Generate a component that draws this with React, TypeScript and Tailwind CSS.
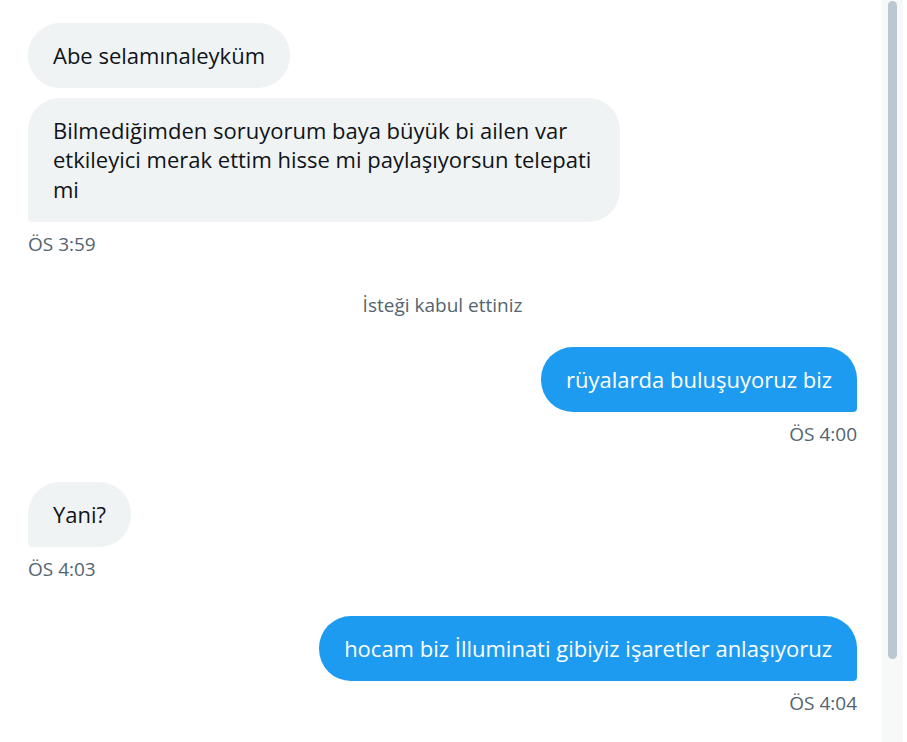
import React from "react";

const font = { fontFamily: '"Open Sans", "Noto Sans", sans-serif' };

function Bubble({ kind, text, tail }: { kind: "in" | "out"; text: string; tail?: boolean }) {
  const base = "max-w-[592px] rounded-[32px] px-[25px] py-[17.75px] text-[22px] leading-[29.5px]";
  if (kind === "in") {
    return (
      <div className={`${base} bg-[#eff3f4] text-[#0f1419] ${tail ? "rounded-bl-[4px]" : ""}`}>
        {text}
      </div>
    );
  }
  return (
    <div className={`${base} bg-[#1d9bf0] text-white ${tail ? "rounded-br-[4px]" : ""}`}>
      {text}
    </div>
  );
}

function Time({ children, right }: { children: React.ReactNode; right?: boolean }) {
  return (
    <div className={`mt-3 text-[19px] leading-5 text-[#536471] ${right ? "text-right" : ""}`}>
      {children}
    </div>
  );
}

export default function App() {
  return (
    <div className="flex h-[742px] w-[907px] overflow-hidden bg-white" style={font}>
      <div className="flex-1 pl-[28px] pr-[25px] pt-[23px]">
        <div className="flex flex-col items-start gap-[10px]">
          <Bubble kind="in" text="Abe selamınaleyküm" />
          <Bubble kind="in" tail text="Bilmediğimden soruyorum baya büyük bi ailen var etkileyici merak ettim hisse mi paylaşıyorsun telepati mi" />
        </div>
        <Time>ÖS 3:59</Time>

        <div className="mt-[41px] text-center text-[19px] leading-5 text-[#536471]">İsteği kabul ettiniz</div>

        <div className="mt-[32px] flex justify-end">
          <Bubble kind="out" tail text="rüyalarda buluşuyoruz biz" />
        </div>
        <Time right>ÖS 4:00</Time>

        <div className="mt-[38px] flex">
          <Bubble kind="in" tail text="Yani?" />
        </div>
        <Time>ÖS 4:03</Time>

        <div className="mt-[37px] flex justify-end">
          <Bubble kind="out" tail text="hocam biz İlluminati gibiyiz işaretler anlaşıyoruz" />
        </div>
        <Time right>ÖS 4:04</Time>
      </div>

      <div className="mr-[4px] flex w-[21px] shrink-0 justify-center bg-[#f7f9f9] pt-[1px]">
        <div className="h-[658px] w-[9px] rounded-full bg-[#b9c8d1]" />
      </div>
    </div>
  );
}
